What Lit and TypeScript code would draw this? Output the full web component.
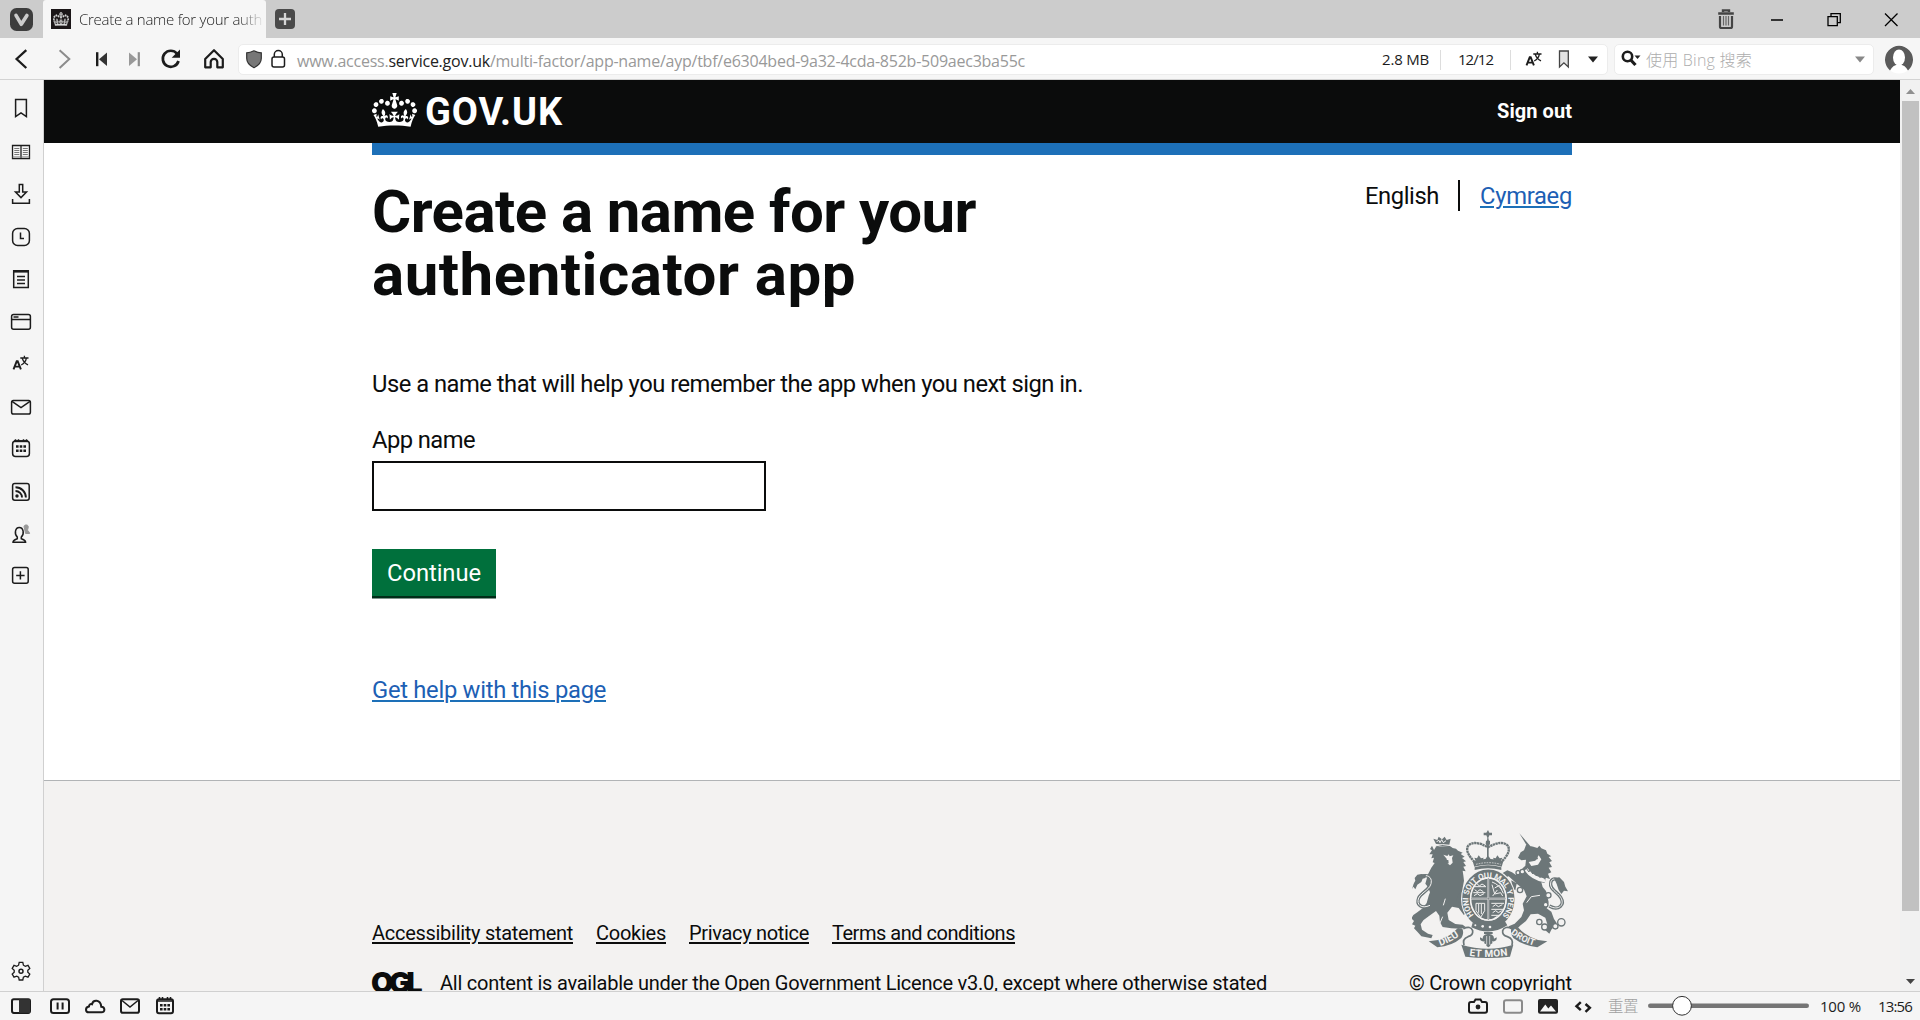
import { LitElement, html, css, svg } from "lit";
import { customElement } from "lit/decorators.js";

const CROWN =
  "M25 30.2c3.5 1.5 7.7-.2 9.1-3.7 1.5-3.6-.2-7.8-3.9-9.2-3.6-1.4-7.6.3-9.1 3.9-1.4 3.5.3 7.5 3.9 9zM9 39.5c3.6 1.5 7.8-.2 9.2-3.7 1.5-3.6-.2-7.8-3.9-9.1-3.6-1.5-7.6.2-9.1 3.8-1.4 3.5.3 7.5 3.8 9zM4.4 57.2c3.5 1.5 7.7-.2 9.1-3.8 1.5-3.6-.2-7.7-3.9-9.1-3.5-1.5-7.6.3-9.1 3.8-1.4 3.5.3 7.6 3.9 9.1zm38.3-21.4c3.5 1.5 7.7-.2 9.1-3.8 1.5-3.6-.2-7.7-3.9-9.1-3.6-1.5-7.6.3-9.1 3.8-1.3 3.6.4 7.7 3.9 9.1zm64.4-5.6c-3.6 1.5-7.8-.2-9.1-3.7-1.5-3.6.2-7.8 3.8-9.2 3.6-1.4 7.7.3 9.2 3.9 1.3 3.5-.4 7.5-3.9 9zm15.9 9.3c-3.6 1.5-7.7-.2-9.1-3.7-1.5-3.6.2-7.8 3.7-9.1 3.6-1.5 7.7.2 9.2 3.8 1.5 3.5-.3 7.5-3.8 9zm4.7 17.7c-3.6 1.5-7.8-.2-9.2-3.8-1.5-3.6.2-7.7 3.9-9.1 3.6-1.5 7.7.3 9.2 3.8 1.3 3.5-.4 7.6-3.9 9.1zM89.3 35.8c-3.6 1.5-7.8-.2-9.2-3.8-1.4-3.6.2-7.7 3.9-9.1 3.6-1.5 7.7.3 9.2 3.8 1.4 3.6-.3 7.7-3.9 9.1zM69.7 17.7l8.9 4.7V9.3l-8.9 2.8c-.2-.3-.5-.6-.9-.9L72.4 0H59.6l3.5 11.2c-.3.3-.6.5-.9.9l-8.8-2.8v13.1l8.8-4.7c.3.3.6.7.9.9l-5 15.4v.1c-.2.8-.4 1.6-.4 2.4 0 4.1 3.1 7.5 7 8.1h.2c.3 0 .7.1 1 .1.4 0 .7 0 1-.1h.2c4-.6 7.1-4.1 7.1-8.1 0-.8-.1-1.7-.4-2.4V34l-5.1-15.4c.4-.2.7-.6 1-.9zM66 92.8c16.9 0 32.8 1.1 47.1 3.2 4-16.9 8.9-26.7 14-33.5l-9.6-3.4c1 4.9 1.1 7.2 0 10.2-1.5-1.4-3-4.3-4.2-8.7L108.6 76c2.8-2 5-3.2 7.5-3.3-4.4 9.4-10 11.9-13.6 11.2-4.3-.8-6.3-4.6-5.6-7.9 1-4.7 5.7-5.9 8-.5 4.3-8.7-3-11.4-7.6-8.8 7.1-7.2 7.9-13.5 2.1-21.1-8 6.1-8.1 12.3-4.5 20.8-4.7-5.4-12.1-2.5-9.5 6.2 3.4-5.2 7.9-2 7.2 3.1-.6 4.3-6.4 7.8-13.5 7.2-10.3-.9-10.9-8-11.2-13.8 2.5-.5 7.1 1.8 11 7.3L80.2 60c-4.1 4.4-8 5.3-12.3 5.4 1.4-4.4 8-11.6 8-11.6H55.5s6.4 7.2 7.9 11.6c-4.2-.1-8-1-12.3-5.4l1.4 16.4c3.9-5.5 8.5-7.7 10.9-7.3-.3 5.8-.9 12.8-11.1 13.8-7.2.6-12.9-2.9-13.5-7.2-.7-5 3.8-8.3 7.1-3.1 2.7-8.7-4.6-11.6-9.4-6.2 3.7-8.5 3.6-14.7-4.6-20.8-5.8 7.6-5 13.9 2.2 21.1-4.7-2.6-11.9.1-7.7 8.8 2.3-5.5 7.1-4.2 8.1.5.7 3.3-1.3 7.1-5.7 7.9-3.5.7-9-1.8-13.5-11.2 2.5.1 4.7 1.3 7.5 3.3l-4.7-15.4c-1.2 4.4-2.7 7.2-4.3 8.7-1.1-3-.9-5.3 0-10.2l-9.5 3.4c5 6.9 9.9 16.7 14 33.5 14.8-2.1 30.8-3.2 47.7-3.2z";

const translateGlyph = svg`
  <path d="M4.500 18.300L7.700 10.300h1L11.900 18.300M5.500 15.600h5.400" stroke-width="1.900"/>
  <path d="M11.300 7h8.200M15.400 4.700v2.300M12.200 14c2.700-1.300 4.600-3.600 5.200-6.800M13.300 7.500c.9 2.700 2.700 5 5.700 6.300" stroke-width="1.300"/>`;

// Panel glyphs, drawn in a 24px box. `top` is the box's distance from the panel's top edge.
const PANEL = [
  { top: 16, art: svg`<path d="M6.600 3.600h10.800v17l-5.400-3.800-5.400 3.800z"/>` },
  { top: 60, art: svg`<path d="M3.500 5.500h8.500v13.200H3.500zM12 5.500h8.500v13.200H12z" stroke-width="1.300"/><path d="M5.300 8.500h5M5.300 10.500h5M5.300 12.500h5M5.300 14.500h5M13.800 8.500h5M13.800 10.500h5M13.800 12.500h5M13.800 14.500h5" stroke="#777" stroke-width="1"/><path d="M3.500 17h17" stroke="#777" stroke-width="1"/>` },
  { top: 102, art: svg`<path d="M10.300 2.600h3.400v7.400h3.800L12 15.600 6.500 10h3.800zM3.600 17v4.300h16.800V17"/>` },
  { top: 145, art: svg`<rect x="3.600" y="3.600" width="16.800" height="16.800" rx="5"/><path d="M11.500 7.500v6H15"/>` },
  { top: 187, art: svg`<path d="M4.700 3.800h14.600v16.600H4.700z"/><path d="M4 4.600h16" stroke-width="2"/><path d="M8 9.500h8M8 13h8M8 16.500h8"/>` },
  { top: 230, art: svg`<rect x="2.600" y="4.600" width="18.800" height="14.600" rx="2"/><path d="M2.600 9.500h18.800M4.500 7h5"/>` },
  { top: 271, art: translateGlyph },
  { top: 315, art: svg`<rect x="2.600" y="5.400" width="18.800" height="13.600" rx="1.800"/><path d="M3 6.300l9 6.200 9-6.200"/>` },
  { top: 356, art: svg`<rect x="3.600" y="5" width="16.800" height="15.600" rx="3"/><path d="M5 5.200h14" stroke-width="2"/><path d="M6.500 3.200v2M9.500 3.200v2M14.500 3.200v2M17.500 3.200v2"/><path d="M7 10.500h2.600M10.700 10.500h2.600M14.400 10.500h2.600M7 14.700h2.600M10.700 14.700h2.600M14.400 14.700h2.600" stroke-width="2.600"/>` },
  { top: 400, art: svg`<rect x="3.600" y="3.600" width="16.600" height="16.600" rx="2.200"/><circle cx="8" cy="16" r="1.700" fill="#1c1c1c" stroke="none"/><path d="M6.500 11a6.500 6.500 0 0 1 6.500 6.500M6.500 7.200a10.400 10.400 0 0 1 10.400 10.300" stroke-width="1.900"/>` },
  { top: 442, art: svg`<path d="M15 4.600c0-2 3.800-2.300 4.200-.3.400 2-.8 2.800-.6 4.200.8.800 1.900 1.200 2 3h-4z" fill="#999" stroke="#999" stroke-width="1"/><path d="M4 20.300c0-2.500 2.600-3 4.300-3.600v-1.600c-3.200-3-2.300-9.600 2-9.600s5.200 6.600 2 9.600v1.600c1.700.6 4.300 1.100 4.300 3.600z" fill="#f5f5f5"/>` },
  { top: 484, art: svg`<rect x="3.600" y="3.600" width="15.600" height="15.600" rx="2"/><path d="M11.400 7.200v8.400M7.200 11.400h8.400"/>` },
];

@customElement("royal-crest")
class RoyalCrest extends LitElement {
  static styles = css`
    :host { display: block; width: 156px; height: 128px; }
    svg { display: block; }
    text { font-family: Roboto, sans-serif; font-weight: 700; fill: #f3f2f1; }
  `;

  render() {
    return html`<svg width="156" height="128" viewBox="96 62 468 384" fill="#6c7678" stroke="none" role="img" aria-label="Royal coat of arms">
      <defs>
        <path id="garter" d="M274 322A70 76 0 0 1 264 236A70 76 0 0 1 386 236A70 76 0 0 1 372 326"/>
        <path id="ribl" d="M181 411Q215 399 248 374"/>
        <path id="ribr" d="M394 370Q424 396 478 411"/>
        <path id="ribm" d="M268 437Q324 445 386 436"/>
      </defs>

      <!-- lion -->
      <path d="M162 122l6-10 42-2 8 6 10 2 6 6 14 6-6 4 12 8-8 4 12 10-8 2 8 12-8 2 7 14-9-2 2 14 2 16-4 22 2 16 2 14 14 14-4 18-10 20-16-22-20-4-14 18 4 22 20 12 22 2 10 8-14 4-30-1-26-4-8-14-2-20-10-14-22 16-16 12-8 12 4 16 18 12 14 4-4 10-30-6-12-14-10-10 4-8-10-4 6-10-8-8 6-10 12-8 16-12 12-16 6-22 4-10-6-16-8-10 8-28 10-20 10-14-6-2 4-14-8 2 4-12-10 0 8-12-6-4 6-10z"/>
      <path d="M190 136l12 4 4-5 3 6 11-3-4 8 2 14-8 8-8-6-2-14z" fill="#f3f2f1"/>
      <path d="M196 152h9l1 10-6 2z"/>
      <path d="M150 288c-26 12-42-2-34-22 8-18 40-26 38-52-2-16-20-18-28-12" fill="none" stroke="#6c7678" stroke-width="10"/>
      <path d="M150 288c-26 12-42-2-34-22 8-18 40-26 38-52-2-16-20-18-28-12" fill="none" stroke="#f3f2f1" stroke-width="3"/>
      <path d="M96 240c4-12 4-18 10-26l-2-8 8-10 12-2 14 2-2 10-8 2-4 10-12 8-6 14-6-8z"/>
      <path d="M236 252l12 14 12-2 4 16-16 4-20-10zM168 104l-8-16 12 4 4-10 10 8 8-8 6 10 12-4-4 18z"/>
      <path d="M168 112q18-8 40-2" fill="none" stroke="#6c7678" stroke-width="5"/>
      <path d="M170 98l6-6 4 8 5-9 5 9 8-6" fill="none" stroke="#f3f2f1" stroke-width="3"/>
      <path d="M166 110q20-8 46-1" fill="none" stroke="#f3f2f1" stroke-width="3"/>
      <path d="M196 268l-6 20M178 346l10-24" stroke="#f3f2f1" stroke-width="3"/>

      <!-- unicorn -->
      <path d="M418 72l40 46-8 6zM460 112l12 4 6-7 6 8 14 6 4 10 12 8-8 2 10 12-8 4 8 14-10 2 8 14-10 4 6 16-12-4-4 16-10-2 4 14 10 12 4 16 4 18-6 18 14 10 8 22 8 12-16 20-6 12-12-10 6-18-6-20-22-12-22 2-14 20-18 14-12 14-18-4-4-8 18-8 20-20 8-20-4-20 12-22-8-20-22-18-4 20-10-6-2-24 14 8-22-20-16 6-6-14 18-10 14 6 12 8 14-12 6-8 8-8 2-18-14 2-10-8 8-16 10-6 6-16z"/>
      <path d="M446 158l20-4 10-16 8 12-10 16-20 4z" fill="#f3f2f1"/>
      <path d="M460 144l10-7 4 12-12 4z"/>
      <path d="M438 180q20 28 58 34" fill="none" stroke="#f3f2f1" stroke-width="11"/>
      <path d="M438 176l9 12 3-11 8 17 5-12 6 18 7-11 4 16 8-9 6 14" fill="none" stroke="#6c7678" stroke-width="3"/>
      <path d="M508 290c28 16 48-4 34-26-10-16-34-24-30-44 2-12 14-14 20-8" fill="none" stroke="#6c7678" stroke-width="10"/>
      <path d="M508 290c28 16 48-4 34-26-10-16-34-24-30-44 2-12 14-14 20-8" fill="none" stroke="#f3f2f1" stroke-width="3"/>
      <path d="M522 206l16-2 14 14 4 14 8 14-12-2-8 10-8-12-6-18z"/>
      <g fill="#f3f2f1" stroke="#6c7678" stroke-width="4">
        <circle cx="414" cy="190" r="6"/><circle cx="427" cy="187" r="7"/><circle cx="420" cy="242" r="8"/><circle cx="505" cy="258" r="8"/>
        <circle cx="497" cy="286" r="7"/><circle cx="478" cy="338" r="8"/><circle cx="494" cy="353" r="9"/><circle cx="526" cy="351" r="8"/><circle cx="544" cy="339" r="11"/>
      </g>
      <path d="M440 280l14-18 26-4" fill="none" stroke="#f3f2f1" stroke-width="3"/>

      <!-- garter and shield -->
      <ellipse cx="325" cy="269" rx="82" ry="92" fill="#f3f2f1"/>
      <ellipse cx="325" cy="269" rx="67" ry="77" fill="none" stroke="#6c7678" stroke-width="23"/>
      <ellipse cx="325" cy="269" rx="51" ry="61"/>
      <g fill="none" stroke="#f3f2f1" stroke-width="3">
        <ellipse cx="325" cy="269" rx="54" ry="64"/>
        <path d="M325 206v126M273 268h104" stroke-width="5"/>
        <path d="M282 232h36M280 250h36M290 222l8 8 8-6 10 6M284 241l8 6 8-6 10 6M282 259l10-6 8 6 12-6"/>
        <path d="M336 218q24 8 34 34M336 226l8 28 18-4 6 10M344 236l14-8 8 14M338 260l14-18"/>
        <path d="M288 282h26v22l-12 20-14-20zM296 284v26M304 284v30"/>
        <path d="M334 282h38M334 300h36M334 318h24M338 292l9-6 8 6 12-6M338 310l9-6 8 6 10-6M343 326l8-4"/>
      </g>
      <g fill="none" stroke="#6c7678" stroke-width="2"><path d="M325 206v126M273 268h104"/></g>
      <path d="M278 340q46 26 96-6l8 14q-52 34-108 6z"/>
      <g fill="#f3f2f1"><circle cx="286" cy="348" r="3"/><circle cx="308" cy="351" r="4"/><circle cx="330" cy="353" r="4"/></g>
      <text font-size="24" dy="9"><textPath href="#garter" textLength="352">HONI SOIT QUI MAL Y PENSE</textPath></text>

      <!-- imperial crown -->
      <path d="M284 164q-32-32-20-52 12-16 42-8l18 10 18-10q32-8 44 8 10 20-22 52z" fill="#f3f2f1"/>
      <path d="M284 158q-30-30-20-48 18-20 60 4 42-24 60-4 10 18-20 48" fill="none" stroke="#6c7678" stroke-width="7" stroke-dasharray="7 1.500"/>
      <path d="M278 156q46-16 92 0l-5 16q-40-12-82 0z"/>
      <path d="M324 62l4 8 8 0 0 8-8 0-3 7 2 10h-6l1-10-3-7-8 0 0-8 8 0zM318 94h12v10l-4 6v36h-5v-36l-4-6zM296 138l7 9 8-2-4 10h-20l-4-10 8 2zM352 138l7 9 8-2-4 10h-20l-4-10 8 2zM324 138l9 13h-18z"/>
      <path d="M284 174q40-12 80 0v8q-40-10-80 0z" />
      <path d="M288 165q38-10 74 0" fill="none" stroke="#f3f2f1" stroke-width="2" stroke-dasharray="5 3"/>

      <!-- motto ribbons -->
      <path d="M146 396l28-4q36-12 60-36l14 4q4 14-4 26-28 24-72 28z"/>
      <path d="M502 396l-28-4q-38-12-58-36l-22 2q-4 14 6 28 28 22 72 28z"/>
      <path d="M244 406q80 24 156 0l-10 36q-66 8-134 0z"/>
      <path d="M250 358q22-10 28 6 2 14-14 18-18 6-12 26M398 358q-24-10-30 6-2 14 14 18 20 6 14 26" fill="none" stroke="#6c7678" stroke-width="5"/>
      <text font-size="30" dy="-1"><textPath href="#ribl">DIEU</textPath></text>
      <text font-size="27" dy="3"><textPath href="#ribr">DROIT</textPath></text>
      <text font-size="30" letter-spacing="1" dy="2"><textPath href="#ribm">ET MON</textPath></text>
      <path d="M312 368h26v6h-10q14 2 14 14l8-4q2 14-14 12 4 8-4 8 0 8-7 10-7-2-7-10-8 0-4-8-16 2-14-12l8 4q0-12 14-14h-10z"/>
      <path d="M320 380v26M329 380v26" stroke="#f3f2f1" stroke-width="2"/>
    </svg>`;
  }
}

@customElement("app-root")
class AppRoot extends LitElement {
  static styles = css`
    :host {
      display: flex; flex-direction: column; width: 1920px; height: 1020px; overflow: hidden;
      background: #f5f5f5; color: #1c1c1c;
      font: 15px/20px "Open Sans", "Noto Sans CJK SC", sans-serif;
    }
    * { box-sizing: border-box; }
    svg { display: block; flex: none; }
    .ico { fill: none; stroke: #1c1c1c; stroke-width: 1.500; }
    [data-w] { display: inline-block; white-space: nowrap; flex: none; }

    .tabs { display: flex; height: 38px; flex: none; background: #ccc; }
    .menu { margin: 8px 0 0 10px; }
    .tab { display: flex; width: 223px; height: 38px; margin-left: 10px; padding: 0 3px 0 8px; background: #f6f6f6; border-radius: 3px 3px 0 0; }
    .fav { width: 20px; height: 20px; margin-top: 9px; background: #1b1618; padding: 3px 2px; }
    .title { width: 184px; height: 30px; margin-left: 8px; padding-top: 9px; font-weight: 300; white-space: nowrap;
      -webkit-mask-image: linear-gradient(90deg, #000 86%, transparent 101%); mask-image: linear-gradient(90deg, #000 86%, transparent 101%); }
    .newtab { margin: 9px 0 0 9px; }
    .winbtns { display: flex; margin: 7px 17px 0 auto; }
    .winbtns svg + svg { margin-left: 33px; }
    .winbtns svg:nth-child(2) { margin-left: 27px; }

    .bar { display: flex; height: 42px; flex: none; padding-top: 6px; background: #f6f6f6; border-bottom: 1px solid #d3d3d3; }
    .nav { display: flex; width: 238px; padding: 3px 0 0 9px; }
    .nav svg:nth-child(2) { margin-left: 20px; }
    .nav svg:nth-child(3) { margin-left: 13px; }
    .nav svg:nth-child(4) { margin-left: 7px; }
    .nav svg:nth-child(5) { margin-left: 14px; }
    .nav svg:nth-child(6) { margin-left: 19px; }
    .field { display: flex; height: 31px; background: #fff; border: 1px solid #ececec; border-radius: 5px; }
    .url { width: 1370px; padding-left: 3px; }
    .url > svg { margin-top: 2px; }
    .addr { width: 728px; margin: 5px 0 0 7px; font-size: 16px; line-height: 22px; color: #999; }
    .addr b { font-weight: 400; color: #222; }
    .size { margin: 4px 0 0 357px; line-height: 21px; }
    .sep { width: 1px; height: 20px; margin: 5px 0 0 11px; background: #ddd; }
    .count { margin: 4px 0 0 17px; line-height: 21px; }
    .count + .sep { margin-left: 17px; }
    .find { width: 260px; margin-left: 6px; padding-left: 4px; }
    .find > svg { margin-top: 2px; }
    .hint { margin: 4px 0 0 3px; font-size: 16px; line-height: 23px; color: #adadad; font-weight: 300; }
    .drop { margin-left: auto; }
    .avatar { margin: 1px 0 0 11px; }

    .body { display: flex; height: 911px; flex: none; }
    .side { display: flex; flex-direction: column; align-items: center; width: 44px; padding-right: 2px; border-right: 1px solid #d0d0d0; }
    .side svg:last-child { margin: auto 0 8px; }

    .page { width: 1856px; height: 911px; overflow: hidden; background: #fff; color: #0b0c0c; font-family: Roboto, "Liberation Sans", sans-serif; }
    .wrap { width: 1200px; margin: 0 auto; }
    .head { height: 63px; background: #0b0c0c; color: #fff; }
    .head .wrap { display: flex; }
    .head svg { margin-top: 13px; }
    .brand { margin: 13px 0 0 8px; font-size: 38px; line-height: 38px; font-weight: 700; }
    .out { margin: 19px 0 0 auto; font-size: 20px; line-height: 25px; font-weight: 700; }
    .main { display: flex; flex-direction: column; align-items: flex-start; height: 637px; border-top: 12px solid #1d70b8; padding-top: 26px; font-size: 23.75px; line-height: 31px; }
    .top { display: flex; width: 1200px; justify-content: space-between; }
    h1 { display: flex; flex-direction: column; align-items: flex-start; margin: 0; font-size: 60px; line-height: 62.500px; font-weight: 700; }
    .lang { display: flex; height: 31px; }
    .rule { width: 2px; height: 31px; margin: -1px 20px 0 19px; background: #0b0c0c; }
    a { color: #1d5fb4; text-decoration: underline; text-decoration-color: #1d70b8; text-decoration-thickness: 2px; text-underline-offset: 2px; }
    .lead { margin-top: 63px; }
    .label { margin-top: 25px; }
    .input { width: 394px; height: 50px; margin-top: 5px; border: 2px solid #0b0c0c; background: #fff; border-radius: 0; padding: 0 6px; }
    .go { width: 124px; height: 47px; margin-top: 38px; padding: 9px 0 0 15px; background: #00703c; color: #fff; box-shadow: 0 2.500px 0 #002d18; }
    .help { margin-top: 79px; }
    .foot { height: 212px; background: #f3f2f1; border-top: 1px solid #b1b4b6; font-size: 20px; line-height: 25px; }
    .foot .wrap { display: flex; justify-content: space-between; padding-top: 50px; }
    .links { display: flex; gap: 23px; margin-top: 90px; }
    .links a { color: #0b0c0c; text-decoration-color: #0b0c0c; }
    .lic { display: flex; margin-top: 25px; }
    .ogl { font: 900 29px/25px Inter, sans-serif; margin: -1px 22px 0 -1px; width: 47px; }
    .crown { display: flex; flex-direction: column; align-items: center; width: 163px; }
    .crown royal-crest { margin: -1px 2px 13px 0; }

    .scroll { display: flex; flex-direction: column; align-items: center; justify-content: space-between; width: 20px; padding: 9px 0 7px; background: #f1f1f1; }
    .thumb { width: 17px; height: 810px; margin-bottom: auto; margin-top: 7px; background: #c1c1c1; }

    .status { display: flex; height: 29px; flex: none; border-top: 1px solid #d0d0d0; padding: 0 8px 0 9px; }
    .status > svg { margin-top: 2px; }
    .status svg:nth-child(2) { margin-left: 15px; }
    .status svg:nth-child(3), .status svg:nth-child(4) { margin-left: 11px; }
    .status svg:nth-child(5) { margin-left: 11px; }
    .status svg.cam { margin-left: auto; }
    .status svg.s2, .status svg.s3 { margin-left: 11px; }
    .status svg.s4 { margin-left: 11px; }
    .status span { margin-top: 4px; }
    .reset { margin-left: 13px; color: #a0a0a0; font-weight: 300; font-size: 15.500px; }
    .status svg.slider { margin: 3px 0 0 10px; }
    .pct { margin-left: 11px; }
    .clock { margin-left: 17px; }
  `;

  // Tracks each run of text out to its nominal width.
  firstUpdated() {
    this.renderRoot.querySelectorAll<HTMLElement>("[data-w]").forEach((el) => {
      const target = Number(el.dataset.w);
      const count = (el.textContent ?? "").length;
      const range = document.createRange();
      range.selectNodeContents(el);
      const natural = range.getBoundingClientRect().width;
      el.style.letterSpacing = `${((target - natural) / count).toFixed(4)}px`;
    });
  }

  icon(art: unknown, cls = "", style = "") {
    return html`<svg class="ico ${cls}" style=${style} width="24" height="24" viewBox="0 0 24 24">${art}</svg>`;
  }

  renderTabs() {
    return html`<div class="tabs">
      <svg class="menu" width="23" height="23" viewBox="0 0 23 23"><rect width="23" height="23" rx="6.500" fill="#3d3d3d"/><path d="M6 7.300l5.300 9 5.600-8.800" fill="none" stroke="#ccc" stroke-width="3.600" stroke-linecap="round" stroke-linejoin="round"/></svg>
      <div class="tab">
        <div class="fav"><svg width="16" height="14" viewBox="0 0 132 97" preserveAspectRatio="none" fill="#ddd" stroke="#aaa" stroke-width="3"><path d=${CROWN}/></svg></div>
        <div class="title"><span data-w="183">Create a name for your auth</span></div>
      </div>
      <svg class="newtab" width="20" height="20" viewBox="0 0 20 20"><rect width="20" height="20" rx="4" fill="#4a4a4a"/><path d="M10 4v12M4 10h12" stroke="#d6d6d6" stroke-width="2.300"/></svg>
      <div class="winbtns">
        ${this.icon(svg`<path d="M4.200 6.500h15.600M9 5V3.400h6V5" stroke="#444" stroke-width="2.400"/><path d="M6 9v10.500Q6 21 7.500 21h9q1.500 0 1.500-1.500V9" stroke="#444" stroke-width="2.200"/><path d="M9.500 9v9.500M12 9v9.500M14.500 9v9.500" stroke="#666" stroke-width="1.200"/>`)}
        ${this.icon(svg`<path d="M6 13h12" stroke="#000"/>`)}
        ${this.icon(svg`<path d="M6 9.600h9.300v9H6zM9 9V6.700h9.300v9H16" stroke="#000" stroke-width="1.300"/>`)}
        ${this.icon(svg`<path d="M6 6.500l12.500 12.500M18.500 6.500L6 19" stroke="#000" stroke-width="1.300"/>`)}
      </div>
    </div>`;
  }

  renderBar() {
    return html`<div class="bar">
      <div class="nav">
        ${this.icon(svg`<path d="M17.300 3.200L7.600 12l9.700 9" stroke-width="2.300"/>`)}
        ${this.icon(svg`<path d="M6.600 3.200L16.300 12l-9.700 9" stroke="#8c8c8c" stroke-width="2"/>`)}
        ${this.icon(svg`<path d="M7.200 5.200v14" stroke-width="2.400"/><path d="M17 5.400v13.600L9 12.200z" fill="#333" stroke="none"/>`)}
        ${this.icon(svg`<path d="M17.800 5.200v14" stroke="#8f8f8f" stroke-width="2.200"/><path d="M8 5.400v13.600l8-6.800z" fill="#999" stroke="none"/>`)}
        ${this.icon(svg`<path d="M18 6.700A8 8 0 1 0 19.500 14" stroke-width="2.700"/><path d="M21 2.500v8.300h-8.300z" fill="#1c1c1c" stroke="none"/>`)}
        ${this.icon(svg`<path d="M3.200 12L12 3.200l8.800 8.800v8.300h-5.500v-5.200a3.300 3.300 0 0 0-6.600 0v5.200H3.200z" stroke-width="2.200" stroke-linejoin="round"/>`)}
      </div>
      <div class="field url">
        ${this.icon(svg`<path d="M12 3.800q4 2 7.300 2v5.500q0 6-7.300 9.400-7.300-3.400-7.300-9.400V5.800q3.300 0 7.300-2z" fill="#777" stroke="#333" stroke-width="1.200"/>`)}
        ${this.icon(svg`<rect x="6" y="10" width="12.500" height="10" rx="2"/><path d="M8.300 10V7.500a4 4 0 0 1 8 0V10"/>`)}
        <div class="addr"><span data-w="728">www.access.<b>service.gov.uk</b>/multi-factor/app-name/ayp/tbf/e6304bed-9a32-4cda-852b-509aec3ba55c</span></div>
        <span class="size" data-w="47">2.8 MB</span><i class="sep"></i>
        <span class="count" data-w="35">12/12</span><i class="sep"></i>
        ${this.icon(translateGlyph, "", "margin-left:11px")}
        ${this.icon(svg`<path d="M7.500 4h8.800v16l-4.400-4.200L7.500 20z" fill="#e4e4e4" stroke="#444" stroke-width="1.300"/>`, "", "margin-left:6px")}
        ${this.icon(svg`<path d="M7 9.500h10L12 15.500z" fill="#222" stroke="none"/>`, "", "margin-left:5px")}
      </div>
      <div class="field find">
        ${this.icon(svg`<circle cx="8.500" cy="9.500" r="4.700" stroke-width="2.600"/><path d="M11.800 13l4.700 5" stroke-width="3.200"/><path d="M15.500 8.500h6l-3 3.600z" fill="#222" stroke="none"/>`)}
        <span class="hint" data-w="106">使用 Bing 搜索</span>
        ${this.icon(svg`<path d="M7 9.500h10L12 15.500z" fill="#888" stroke="none"/>`, "drop", "margin-right:1px")}
      </div>
      <svg class="avatar" width="28" height="29" viewBox="0 0 28 29"><circle cx="14" cy="14.500" r="14" fill="#fff"/><path d="M5 25.500A14 14 0 1 1 23 25.500Q20 19.500 14 19.500T5 25.500z" fill="#5a5a5a"/><ellipse cx="14" cy="12.500" rx="6" ry="8" fill="#fff"/><path d="M6 26q2-6 8-6t8 6z" fill="#fff"/></svg>
    </div>`;
  }

  renderPage() {
    return html`<div class="page">
      <div class="head"><div class="wrap">
        <svg width="45" height="34" viewBox="0 0 132 97" preserveAspectRatio="none" fill="#fff"><path d=${CROWN}/></svg>
        <span class="brand" data-w="138">GOV.UK</span>
        <span class="out" data-w="75">Sign out</span>
      </div></div>
      <div class="wrap main">
        <div class="top">
          <h1><span data-w="604">Create a name for your</span><span data-w="484">authenticator app</span></h1>
          <div class="lang"><span data-w="74">English</span><i class="rule"></i><a data-w="92">Cymraeg</a></div>
        </div>
        <span class="lead" data-w="711">Use a name that will help you remember the app when you next sign in.</span>
        <span class="label" data-w="103">App name</span>
        <input class="input" aria-label="App name" />
        <div class="go"><span data-w="94">Continue</span></div>
        <a class="help" data-w="234">Get help with this page</a>
      </div>
      <div class="foot"><div class="wrap">
        <div>
          <div class="links">
            <a data-w="201">Accessibility statement</a><a data-w="70">Cookies</a><a data-w="120">Privacy notice</a><a data-w="183">Terms and conditions</a>
          </div>
          <div class="lic"><span class="ogl" data-w="47">OGL</span><span data-w="827">All content is available under the Open Government Licence v3.0, except where otherwise stated</span></div>
        </div>
        <div class="crown"><royal-crest></royal-crest><span data-w="163">© Crown copyright</span></div>
      </div></div>
    </div>`;
  }

  renderStatus() {
    return html`<div class="status">
      ${this.icon(svg`<rect x="3" y="5.300" width="18" height="13.600" rx="1.800" stroke-width="2"/><path d="M10 5.300h11v13.600H10z" fill="#333" stroke="none"/>`)}
      ${this.icon(svg`<rect x="3" y="5.300" width="18" height="13.600" rx="2.500" stroke-width="2"/><path d="M9.600 8.500v7M14.600 8.500v7" stroke-width="2"/>`)}
      ${this.icon(svg`<path d="M6 18.300h12.500c4 0 3.700-5.200-.2-5.500C17.500 5 10 5.500 9 10.200c-1.800-.6-3 .5-3 2.300-4 .6-4 5.800 0 5.800z" stroke-width="2"/>`)}
      ${this.icon(svg`<rect x="3" y="5.300" width="18" height="13.400" rx="1.800" stroke-width="2"/><path d="M4 6.500l8 6.500 8-6.500" stroke-width="1.500"/>`)}
      ${this.icon(svg`<rect x="4" y="5.300" width="16" height="14" rx="2" stroke-width="2"/><path d="M6.500 3v2M9.500 3v2M14.500 3v2M17.500 3v2M4 7h16" stroke-width="1.600"/><path d="M7 11.200h2.600M10.700 11.200h2.600M14.400 11.200h2.600M7 15.200h2.600M10.700 15.200h2.600M14.400 15.200h2.600" stroke-width="2.400"/>`)}
      ${this.icon(svg`<path d="M5 8h3l1.500-2.500h5L16 8h3q2 0 2 2v6.700q0 2-2 2H5q-2 0-2-2V10q0-2 2-2z" stroke-width="2"/><circle cx="12" cy="13" r="2.400" fill="#222" stroke="none"/>`, "cam")}
      ${this.icon(svg`<rect x="3" y="6.300" width="18" height="12.400" rx="2" stroke="#8a8a8a" stroke-width="2"/>`, "s2")}
      ${this.icon(svg`<rect x="2" y="5" width="20" height="14.700" rx="2" fill="#222" stroke="none"/><path d="M4 17.500l5.300-7 3 4 2.700-3 5 6z" fill="#f5f5f5" stroke="none"/>`, "s3")}
      ${this.icon(svg`<path d="M9.800 8.200l-4.300 4 4.300 4M14.500 10l4.300 3.800-4.300 4" stroke-width="2.500"/>`, "s4")}
      <span class="reset" data-w="30">重置</span>
      <svg class="slider" width="161" height="22" viewBox="0 0 161 22"><rect y="8.500" width="161" height="4.500" rx="2.200" fill="#757575"/><circle cx="34" cy="10.800" r="9.400" fill="#fff" stroke="#333" stroke-width="1"/></svg>
      <span class="pct" data-w="41">100 %</span><span class="clock" data-w="34">13:56</span>
    </div>`;
  }

  render() {
    return html`
      ${this.renderTabs()} ${this.renderBar()}
      <div class="body">
        <div class="side">
          ${PANEL.map((p, i) => this.icon(p.art, "", `margin-top:${i ? p.top - PANEL[i - 1].top - 24 : p.top}px`))}
          ${this.icon(svg`<path d="M10.200 3.400h3.600l.6 2.800 1.900 1.100 2.700-1 1.800 3.100-2 1.900v1.800l2 1.900-1.800 3.100-2.700-1-1.900 1.100-.6 2.800h-3.600l-.6-2.800-1.900-1.100-2.700 1L3.200 15l2-1.900v-1.800l-2-1.900L5 6.300l2.700 1 1.900-1.100z" stroke-width="1.300"/><circle cx="12" cy="12.200" r="2"/>`)}
        </div>
        ${this.renderPage()}
        <div class="scroll">
          <svg width="9" height="5" viewBox="0 0 9 5" fill="#8f8f8f"><path d="M0 5h9L4.500 0z"/></svg>
          <div class="thumb"></div>
          <svg width="9" height="5" viewBox="0 0 9 5" fill="#444"><path d="M0 0h9L4.500 5z"/></svg>
        </div>
      </div>
      ${this.renderStatus()}
    `;
  }
}
